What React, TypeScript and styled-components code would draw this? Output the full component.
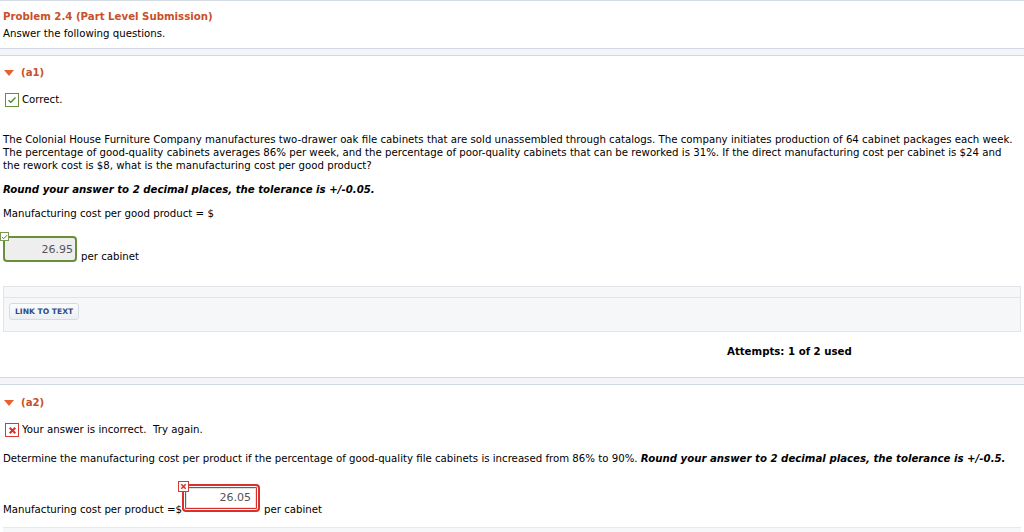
import React from 'react';
import styled, { createGlobalStyle } from 'styled-components';

const GlobalStyle = createGlobalStyle`
  body {
    margin: 0;
    background: #fff;
    font-family: "DejaVu Sans", Verdana, sans-serif;
    font-size: 10.2px;
    color: #000;
  }
`;

const Page = styled.div`
  width: 1024px;
  border-top: 1px solid #d5dbe3;
`;

const Header = styled.div`
  padding: 9px 3px 8px;
`;

const Title = styled.div`
  color: #c8502a;
  font-weight: bold;
  line-height: 14px;
`;

const Line = styled.div<{ $mt?: number; $mb?: number }>`
  line-height: 13px;
  margin-top: ${p => p.$mt ?? 0}px;
  margin-bottom: ${p => p.$mb ?? 0}px;
  white-space: nowrap;
`;

const Band = styled.div`
  height: 6px;
  background: #f3f5f8;
  border-top: 1px solid #d2d9e2;
  border-bottom: 1px solid #d2d9e2;
`;

const Part = styled.div`
  padding: 0 0 0 3px;
`;

const PartTitle = styled.div<{ $mt: number }>`
  display: flex;
  align-items: center;
  gap: 7px;
  margin-top: ${p => p.$mt}px;
  color: #c8502a;
  font-weight: bold;
  line-height: 14px;
`;

const Triangle = styled.span`
  width: 0;
  height: 0;
  margin-left: 1px;
  border-left: 5px solid transparent;
  border-right: 5px solid transparent;
  border-top: 6px solid #e8602c;
`;

const Status = styled.div<{ $mt: number }>`
  display: flex;
  align-items: center;
  gap: 3px;
  margin-top: ${p => p.$mt}px;
  line-height: 14px;
`;

const Mark = styled.span<{ $ok: boolean }>`
  display: inline-flex;
  align-items: center;
  justify-content: center;
  box-sizing: border-box;
  width: 14px;
  height: 14px;
  margin-left: 2px;
  background: #fff;
  border: 1px solid ${p => (p.$ok ? '#6b8e3a' : '#d23a32')};
`;

const BoldItalic = styled.span`
  font-weight: bold;
  font-style: italic;
`;

const AnswerRow = styled.div<{ $mt: number }>`
  display: flex;
  align-items: flex-end;
  margin-top: ${p => p.$mt}px;
`;

const InputWrap = styled.div`
  position: relative;
`;

const Badge = styled.span<{ $ok: boolean }>`
  position: absolute;
  display: flex;
  align-items: center;
  justify-content: center;
  box-sizing: border-box;
  width: ${p => (p.$ok ? 9 : 11)}px;
  height: ${p => (p.$ok ? 9 : 11)}px;
  left: ${p => (p.$ok ? -3 : -4)}px;
  top: ${p => (p.$ok ? -4 : -3)}px;
  background: #fff;
  border: 1px solid ${p => (p.$ok ? '#7a9a50' : '#d23a32')};
  z-index: 1;
`;

const OkInput = styled.div`
  box-sizing: border-box;
  width: 74px;
  height: 26px;
  border: 2px solid #6b8e3a;
  border-radius: 4px;
  background: #eeeeef;
  color: #555;
  text-align: right;
  padding: 5px 2px 0 0;
  font-size: 11px;
`;

const BadInput = styled.div`
  box-sizing: border-box;
  width: 78px;
  height: 28px;
  border: 2px solid #d8312b;
  border-radius: 4px;
  box-shadow: inset 0 0 0 1px #fff, inset 0 0 0 2px #d8312b, inset 0 0 0 3px #e2e2e2;
  background: #fff;
  color: #555;
  text-align: right;
  padding: 5px 7px 0 0;
  font-size: 11px;
`;

const Unit = styled.span<{ $mb: number }>`
  margin-left: 4px;
  margin-bottom: ${p => p.$mb}px;
  line-height: 13px;
`;

const LinkPanel = styled.div`
  margin: 24px 3px 0;
  height: 46px;
  box-sizing: border-box;
  border: 1px solid #e1e5ea;
  background: #f6f7f9;
`;

const LinkHead = styled.div`
  height: 10px;
  border-bottom: 1px solid #e1e5ea;
`;

const LinkButton = styled.button`
  margin: 5px 0 0 5px;
  height: 17px;
  padding: 0 5px;
  border: 1px solid #d6dbe3;
  border-radius: 3px;
  background: linear-gradient(#fbfcfd, #eceff3);
  color: #2d4d85;
  font-family: "DejaVu Sans", Verdana, sans-serif;
  font-size: 7.6px;
  font-weight: bold;
`;

const Attempts = styled.div`
  margin: 13px 0 18px 727px;
  font-weight: bold;
  line-height: 14px;
`;

const Bottom = styled.div`
  margin: 15px 3px 0;
  height: 6px;
  border-top: 1px solid #e6e9ee;
  background: #f6f7f9;
`;

const Check = () => (
  <svg width="10" height="8" viewBox="0 0 10 8">
    <path d="M1.5 4.2 L3.8 6.3 L8.5 1.5" fill="none" stroke="#4a8a2a" strokeWidth="1.3" />
  </svg>
);

const SmallCheck = () => (
  <svg width="7" height="6" viewBox="0 0 7 6">
    <path d="M1 3.2 L2.7 4.7 L6 1.2" fill="none" stroke="#4a8a2a" strokeWidth="1" />
  </svg>
);

const Cross = ({ size }: { size: number }) => (
  <svg width={size} height={size} viewBox="0 0 8 8">
    <path d="M1.5 1.5 L6.5 6.5 M6.5 1.5 L1.5 6.5" stroke="#d8312b" strokeWidth="1.8" />
  </svg>
);

export default function App() {
  return (
    <Page>
      <GlobalStyle />
      <Header>
        <Title>Problem 2.4 (Part Level Submission)</Title>
        <Line $mt={3}>Answer the following questions.</Line>
      </Header>
      <Band />

      <Part>
        <PartTitle $mt={10}>
          <Triangle />
          (a1)
        </PartTitle>
        <Status $mt={13}>
          <Mark $ok>
            <Check />
          </Mark>
          Correct.
        </Status>
        <Line $mt={26}>
          The Colonial House Furniture Company manufactures two-drawer oak file cabinets that are sold unassembled through catalogs. The company initiates production of 64 cabinet packages each week.
          <br />
          The percentage of good-quality cabinets averages 86% per week, and the percentage of poor-quality cabinets that can be reworked is 31%. If the direct manufacturing cost per cabinet is $24 and
          <br />
          the rework cost is $8, what is the manufacturing cost per good product?
        </Line>
        <Line $mt={11}>
          <BoldItalic>Round your answer to 2 decimal places, the tolerance is +/-0.05.</BoldItalic>
        </Line>
        <Line $mt={11}>Manufacturing cost per good product = $</Line>
        <AnswerRow $mt={16}>
          <InputWrap>
            <Badge $ok>
              <SmallCheck />
            </Badge>
            <OkInput>26.95</OkInput>
          </InputWrap>
          <Unit $mb={-1}>per cabinet</Unit>
        </AnswerRow>
      </Part>

      <LinkPanel>
        <LinkHead />
        <LinkButton>LINK TO TEXT</LinkButton>
      </LinkPanel>

      <Attempts>Attempts: 1 of 2 used</Attempts>
      <Band />

      <Part>
        <PartTitle $mt={11}>
          <Triangle />
          (a2)
        </PartTitle>
        <Status $mt={13}>
          <Mark $ok={false}>
            <Cross size={9} />
          </Mark>
          Your answer is incorrect.&nbsp; Try again.
        </Status>
        <Line $mt={15}>
          Determine the manufacturing cost per product if the percentage of good-quality file cabinets is increased from 86% to 90%.{' '}
          <BoldItalic>Round your answer to 2 decimal places, the tolerance is +/-0.5.</BoldItalic>
        </Line>
        <AnswerRow $mt={19}>
          <Line $mb={-4}>Manufacturing cost per product =$</Line>
          <InputWrap>
            <Badge $ok={false}>
              <Cross size={7} />
            </Badge>
            <BadInput>26.05</BadInput>
          </InputWrap>
          <Unit $mb={-4}>per cabinet</Unit>
        </AnswerRow>
      </Part>
      <Bottom />
    </Page>
  );
}
